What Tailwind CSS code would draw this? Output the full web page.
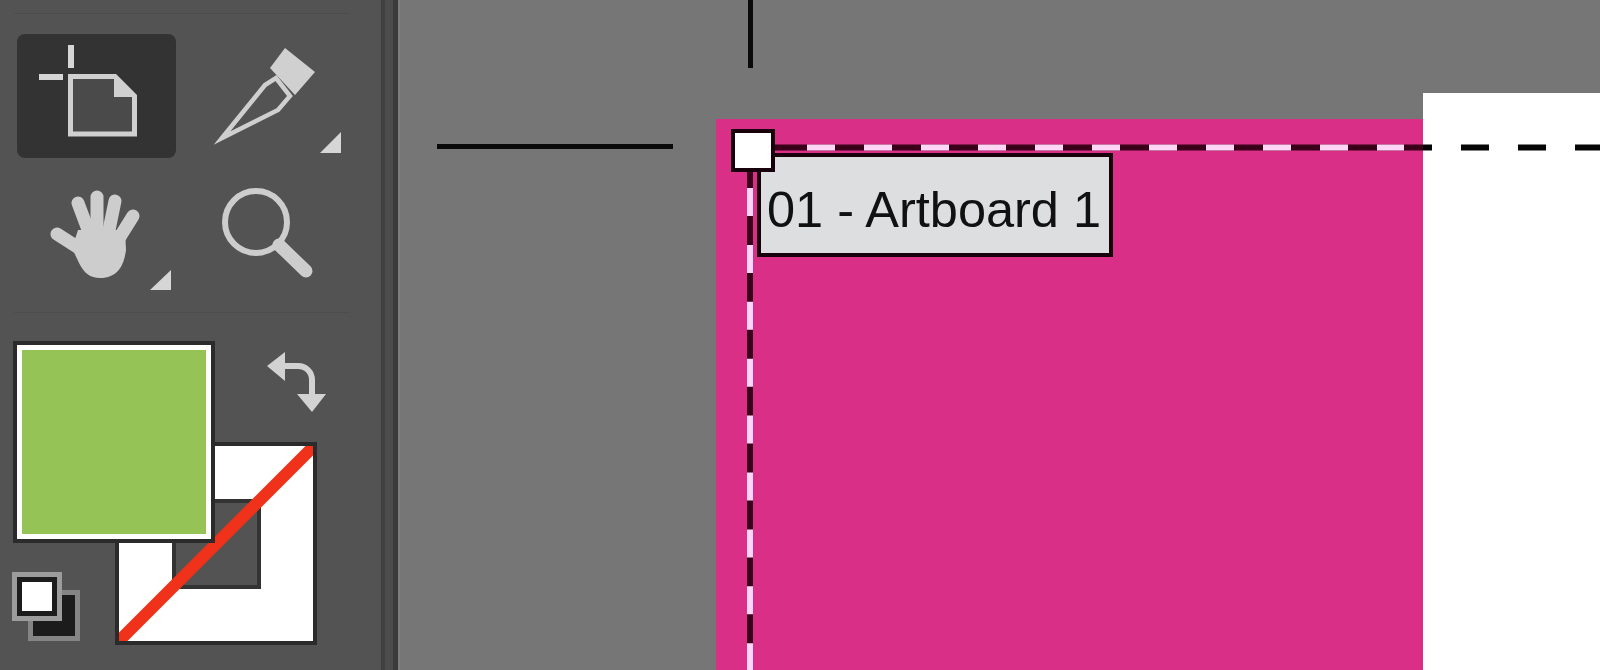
<!DOCTYPE html>
<html lang="en">
<head>
<meta charset="utf-8">
<title>Artboard tool</title>
<script src="https://cdn.jsdelivr.net/npm/@tailwindcss/browser@4"></script>
</head>
<body class="m-0 overflow-hidden bg-[#767676]">
<div class="flex h-[670px] w-[1600px] overflow-hidden">
  <aside class="h-full w-[381px] shrink-0 bg-[#535353] pt-[13px]">
    <div class="ml-[14px] h-px w-[336px] bg-[#4c4c4c]"></div>
    <div class="ml-[17px] mt-[20px] grid w-[324px] grid-cols-[159px_159px] grid-rows-[124px_124px] gap-[6px]">
      <div class="rounded-lg bg-[#333333]">
        <svg class="block overflow-visible" width="159" height="124" viewBox="17 34 159 124">
          <path d="M71 45V68M39 77H63" stroke="#d6d6d6" stroke-width="6" fill="none"/>
          <path d="M70.500 76.500H115L134.500 96V134H70.500Z" fill="#4a4a4a" stroke="#d0d0d0" stroke-width="5"/>
          <path d="M114 76V97H136Z" fill="#d0d0d0"/>
        </svg>
      </div>
      <div>
        <svg class="block overflow-visible" width="159" height="124" viewBox="182 34 159 124">
          <path d="M285 48L315 72L295 95L270 68Z" fill="#d0d0d0"/>
          <path d="M222 138L265 85L276 78L290 96L278 110Z" fill="none" stroke="#cfcfcf" stroke-width="4.500" stroke-linejoin="miter" stroke-miterlimit="10"/>
          <path d="M341 132V153H320Z" fill="#d6d6d6"/>
        </svg>
      </div>
      <div>
        <svg class="block overflow-visible" width="159" height="124" viewBox="17 164 159 124">
          <g stroke="#cdcdcd" stroke-width="13" stroke-linecap="round" fill="none">
            <path d="M57 234L85 252"/>
            <path d="M78 203L90 235"/>
            <path d="M97 197V235"/>
            <path d="M115 201L108 235"/>
            <path d="M133 216L118 240"/>
          </g>
          <path d="M78 230H125L126 250C124 265 118 278 100 278C90 278 84 273 79 263L72 248Z" fill="#cdcdcd"/>
          <path d="M171 270V290H150Z" fill="#d6d6d6"/>
        </svg>
      </div>
      <div>
        <svg class="block overflow-visible" width="159" height="124" viewBox="182 164 159 124">
          <circle cx="256" cy="222" r="31" fill="none" stroke="#cdcdcd" stroke-width="6"/>
          <path d="M279 245L306 271" stroke="#cdcdcd" stroke-width="13" stroke-linecap="round"/>
        </svg>
      </div>
    </div>
    <div class="ml-[14px] mt-[24px] h-px w-[336px] bg-[#4d4d4d]"></div>
    <div class="relative ml-[13px] mt-[28px] h-[304px] w-[304px]">
      <div class="absolute left-[102px] top-[101px] h-[203px] w-[202px] overflow-hidden border-4 border-[#2b2b2b] bg-white">
        <div class="absolute left-[53px] top-[53px] h-[90px] w-[89px] border-4 border-[#333333] bg-[#535353]"></div>
        <svg class="absolute inset-0" width="194" height="195" viewBox="0 0 194 195">
          <line x1="-2" y1="197" x2="196" y2="-1" stroke="#ef3219" stroke-width="12"/>
        </svg>
      </div>
      <div class="absolute left-0 top-0 h-[202px] w-[202px] border-4 border-[#2b2b2b]">
        <div class="h-full w-full border-[5px] border-white bg-[#95c355]"></div>
      </div>
      <svg class="absolute left-[250px] top-[8px] overflow-visible" width="62" height="66" viewBox="263 350 62 66">
        <path d="M267 367L285 353V382Z" fill="#d2d2d2"/>
        <path d="M283 367H298C306 367 312 373 312 381V397" fill="none" stroke="#d2d2d2" stroke-width="6"/>
        <path d="M297 395H326L312 413Z" fill="#d2d2d2"/>
      </svg>
      <div class="absolute left-[15px] top-[249px] h-[51px] w-[52px] border-[5px] border-[#858585] bg-[#1c1c1c]"></div>
      <div class="absolute left-[-1px] top-[231px] h-[49px] w-[50px] border-[5px] border-[#9c9c9c] bg-[#1c1c1c] p-[5px]">
        <div class="h-full w-full bg-white"></div>
      </div>
    </div>
  </aside>
  <div class="flex h-full w-[17px] shrink-0">
    <div class="h-full w-[4px] bg-[#404040]"></div>
    <div class="h-full w-[8px] bg-[#4c4c4c]"></div>
    <div class="h-full w-[5px] bg-[#3b3b3b]"></div>
  </div>
  <main class="relative h-full flex-1 overflow-hidden border-l-2 border-[#7e7e7e] bg-[#767676]">
    <div class="absolute left-[316px] top-[119px] h-[551px] w-[707px] bg-[#da2f87]"></div>
    <div class="absolute left-[1023px] top-[93px] h-[577px] w-[177px] bg-white"></div>
    <svg class="absolute left-[-2px] top-0" width="1202" height="670" viewBox="398 0 1202 670">
      <line x1="750.500" y1="0" x2="750.500" y2="68" stroke="#0a0a0a" stroke-width="5"/>
      <line x1="437" y1="146.500" x2="673" y2="146.500" stroke="#0a0a0a" stroke-width="5"/>
      <line x1="770" y1="147.500" x2="1423" y2="147.500" stroke="#3a0019" stroke-width="6"/>
      <line x1="807" y1="147.500" x2="1404" y2="147.500" stroke="#ffd6f5" stroke-width="6" stroke-dasharray="28 29"/>
      <line x1="1423" y1="147.500" x2="1600" y2="147.500" stroke="#050505" stroke-width="6" stroke-dasharray="28 29" stroke-dashoffset="19"/>
      <line x1="750" y1="165" x2="750" y2="670" stroke="#3a0019" stroke-width="6"/>
      <line x1="750" y1="188" x2="750" y2="670" stroke="#ffd6f5" stroke-width="6" stroke-dasharray="28 28.900"/>
    </svg>
    <div class="absolute left-[357px] top-[153px] flex h-[104px] w-[356px] items-center border-4 border-[#17000c] bg-[#dcdedf] pl-[6px] pt-[10px] font-['Liberation_Sans',Arial,sans-serif] text-[50.500px] leading-none whitespace-nowrap text-[#111111]">01 - Artboard 1</div>
    <div class="absolute left-[331px] top-[129px] h-[43px] w-[44px] border-4 border-[#17000c] bg-white"></div>
  </main>
</div>
</body>
</html>
